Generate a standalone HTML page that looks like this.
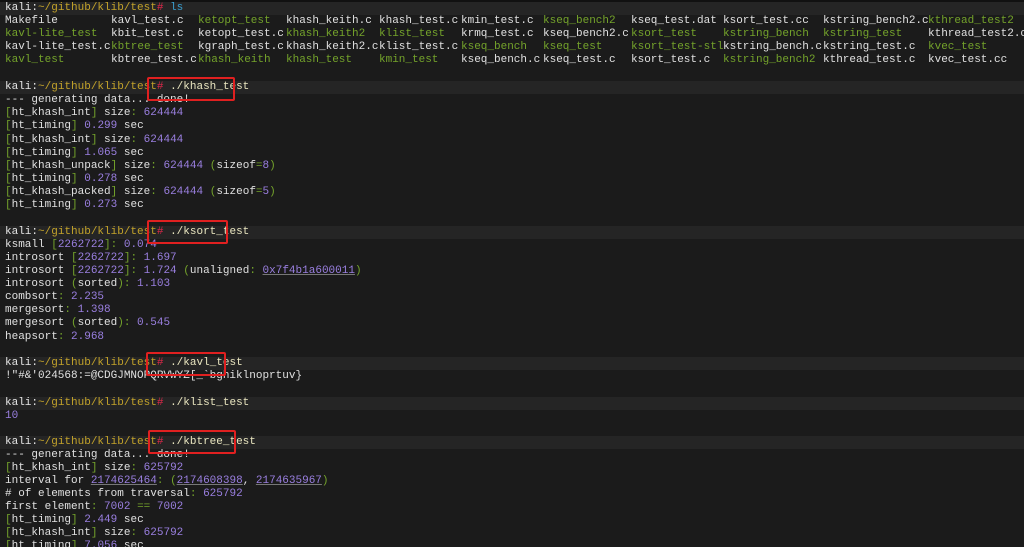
<!DOCTYPE html>
<html><head><meta charset="utf-8"><style>
html,body{margin:0;padding:0;background:#1b1b1b;width:1024px;height:547px;overflow:hidden;}
body{position:relative;font-family:"Liberation Mono","DejaVu Sans Mono",monospace;font-size:11px;color:#e0e0e0;}
.l{position:absolute;left:0;width:1024px;height:13px;line-height:13px;white-space:pre;}
.p{background:#252525;}
.t{position:absolute;top:0;}
.w{color:#e4e4e4}.y{color:#c2a22a}.r{color:#e0284a}.c{color:#3a9fd0}
.g{color:#74a32b}.n{color:#9a7fe0}.cmd{color:#eae6c0}
.u{text-decoration:underline;text-decoration-color:#777}
.box{position:absolute;border:2px solid #e02020;border-radius:2px;box-sizing:border-box;}
</style></head><body>
<div style="position:absolute;top:0;left:0;width:1024px;height:2px;background:#111"></div>
<div class="l p" style="top:2px"><span class="t" style="left:5px"><span class="w">kali:</span><span class="y">~/github/klib/test</span><span class="r">#</span> <span class="c">ls</span></span></div>
<div class="l" style="top:15px"><span class="t" style="left:5px">Makefile</span><span class="t" style="left:111px">kavl_test.c</span><span class="t g" style="left:198px">ketopt_test</span><span class="t" style="left:286px">khash_keith.c</span><span class="t" style="left:379px">khash_test.c</span><span class="t" style="left:461px">kmin_test.c</span><span class="t g" style="left:543px">kseq_bench2</span><span class="t" style="left:631px">kseq_test.dat</span><span class="t" style="left:723px">ksort_test.cc</span><span class="t" style="left:823px">kstring_bench2.c</span><span class="t g" style="left:928px">kthread_test2</span></div>
<div class="l" style="top:28px"><span class="t g" style="left:5px">kavl-lite_test</span><span class="t" style="left:111px">kbit_test.c</span><span class="t" style="left:198px">ketopt_test.c</span><span class="t g" style="left:286px">khash_keith2</span><span class="t g" style="left:379px">klist_test</span><span class="t" style="left:461px">krmq_test.c</span><span class="t" style="left:543px">kseq_bench2.c</span><span class="t g" style="left:631px">ksort_test</span><span class="t g" style="left:723px">kstring_bench</span><span class="t g" style="left:823px">kstring_test</span><span class="t" style="left:928px">kthread_test2.c</span></div>
<div class="l" style="top:41px"><span class="t" style="left:5px">kavl-lite_test.c</span><span class="t g" style="left:111px">kbtree_test</span><span class="t" style="left:198px">kgraph_test.c</span><span class="t" style="left:286px">khash_keith2.c</span><span class="t" style="left:379px">klist_test.c</span><span class="t g" style="left:461px">kseq_bench</span><span class="t g" style="left:543px">kseq_test</span><span class="t g" style="left:631px">ksort_test-stl</span><span class="t" style="left:723px">kstring_bench.c</span><span class="t" style="left:823px">kstring_test.c</span><span class="t g" style="left:928px">kvec_test</span></div>
<div class="l" style="top:54px"><span class="t g" style="left:5px">kavl_test</span><span class="t" style="left:111px">kbtree_test.c</span><span class="t g" style="left:198px">khash_keith</span><span class="t g" style="left:286px">khash_test</span><span class="t g" style="left:379px">kmin_test</span><span class="t" style="left:461px">kseq_bench.c</span><span class="t" style="left:543px">kseq_test.c</span><span class="t" style="left:631px">ksort_test.c</span><span class="t g" style="left:723px">kstring_bench2</span><span class="t" style="left:823px">kthread_test.c</span><span class="t" style="left:928px">kvec_test.cc</span></div>

<div class="l p" style="top:81px"><span class="t" style="left:5px"><span class="w">kali:</span><span class="y">~/github/klib/test</span><span class="r">#</span> <span class="cmd">./khash_test</span></span></div>
<div class="l" style="top:94px"><span class="t" style="left:5px">--- generating data... done!</span></div>
<div class="l" style="top:107px"><span class="t" style="left:5px"><span class="g">[</span>ht_khash_int<span class="g">]</span> size<span class="g">:</span> <span class="n">624444</span></span></div>
<div class="l" style="top:120px"><span class="t" style="left:5px"><span class="g">[</span>ht_timing<span class="g">]</span> <span class="n">0.299</span> sec</span></div>
<div class="l" style="top:134px"><span class="t" style="left:5px"><span class="g">[</span>ht_khash_int<span class="g">]</span> size<span class="g">:</span> <span class="n">624444</span></span></div>
<div class="l" style="top:147px"><span class="t" style="left:5px"><span class="g">[</span>ht_timing<span class="g">]</span> <span class="n">1.065</span> sec</span></div>
<div class="l" style="top:160px"><span class="t" style="left:5px"><span class="g">[</span>ht_khash_unpack<span class="g">]</span> size<span class="g">:</span> <span class="n">624444</span> <span class="g">(</span>sizeof<span class="g">=</span><span class="n">8</span><span class="g">)</span></span></div>
<div class="l" style="top:173px"><span class="t" style="left:5px"><span class="g">[</span>ht_timing<span class="g">]</span> <span class="n">0.278</span> sec</span></div>
<div class="l" style="top:186px"><span class="t" style="left:5px"><span class="g">[</span>ht_khash_packed<span class="g">]</span> size<span class="g">:</span> <span class="n">624444</span> <span class="g">(</span>sizeof<span class="g">=</span><span class="n">5</span><span class="g">)</span></span></div>
<div class="l" style="top:199px"><span class="t" style="left:5px"><span class="g">[</span>ht_timing<span class="g">]</span> <span class="n">0.273</span> sec</span></div>

<div class="l p" style="top:226px"><span class="t" style="left:5px"><span class="w">kali:</span><span class="y">~/github/klib/test</span><span class="r">#</span> <span class="cmd">./ksort_test</span></span></div>
<div class="l" style="top:239px"><span class="t" style="left:5px">ksmall <span class="g">[</span><span class="n">2262722</span><span class="g">]:</span> <span class="n">0.074</span></span></div>
<div class="l" style="top:252px"><span class="t" style="left:5px">introsort <span class="g">[</span><span class="n">2262722</span><span class="g">]:</span> <span class="n">1.697</span></span></div>
<div class="l" style="top:265px"><span class="t" style="left:5px">introsort <span class="g">[</span><span class="n">2262722</span><span class="g">]:</span> <span class="n">1.724</span> <span class="g">(</span>unaligned<span class="g">:</span> <span class="n u">0x7f4b1a600011</span><span class="g">)</span></span></div>
<div class="l" style="top:278px"><span class="t" style="left:5px">introsort <span class="g">(</span>sorted<span class="g">):</span> <span class="n">1.103</span></span></div>
<div class="l" style="top:291px"><span class="t" style="left:5px">combsort<span class="g">:</span> <span class="n">2.235</span></span></div>
<div class="l" style="top:304px"><span class="t" style="left:5px">mergesort<span class="g">:</span> <span class="n">1.398</span></span></div>
<div class="l" style="top:317px"><span class="t" style="left:5px">mergesort <span class="g">(</span>sorted<span class="g">):</span> <span class="n">0.545</span></span></div>
<div class="l" style="top:331px"><span class="t" style="left:5px">heapsort<span class="g">:</span> <span class="n">2.968</span></span></div>

<div class="l p" style="top:357px"><span class="t" style="left:5px"><span class="w">kali:</span><span class="y">~/github/klib/test</span><span class="r">#</span> <span class="cmd">./kavl_test</span></span></div>
<div class="l" style="top:370px"><span class="t" style="left:5px">!"#&amp;'024568:=@CDGJMNOPQRVWYZ[_`bghiklnoprtuv}</span></div>

<div class="l p" style="top:397px"><span class="t" style="left:5px"><span class="w">kali:</span><span class="y">~/github/klib/test</span><span class="r">#</span> <span class="cmd">./klist_test</span></span></div>
<div class="l" style="top:410px"><span class="t n" style="left:5px">10</span></div>

<div class="l p" style="top:436px"><span class="t" style="left:5px"><span class="w">kali:</span><span class="y">~/github/klib/test</span><span class="r">#</span> <span class="cmd">./kbtree_test</span></span></div>
<div class="l" style="top:449px"><span class="t" style="left:5px">--- generating data... done!</span></div>
<div class="l" style="top:462px"><span class="t" style="left:5px"><span class="g">[</span>ht_khash_int<span class="g">]</span> size<span class="g">:</span> <span class="n">625792</span></span></div>
<div class="l" style="top:475px"><span class="t" style="left:5px">interval for <span class="n u">2174625464</span><span class="g">:</span> <span class="g">(</span><span class="n u">2174608398</span>, <span class="n u">2174635967</span><span class="g">)</span></span></div>
<div class="l" style="top:488px"><span class="t" style="left:5px"># of elements from traversal<span class="g">:</span> <span class="n">625792</span></span></div>
<div class="l" style="top:501px"><span class="t" style="left:5px">first element<span class="g">:</span> <span class="n">7002</span> <span class="g">==</span> <span class="n">7002</span></span></div>
<div class="l" style="top:514px"><span class="t" style="left:5px"><span class="g">[</span>ht_timing<span class="g">]</span> <span class="n">2.449</span> sec</span></div>
<div class="l" style="top:527px"><span class="t" style="left:5px"><span class="g">[</span>ht_khash_int<span class="g">]</span> size<span class="g">:</span> <span class="n">625792</span></span></div>
<div class="l" style="top:540px"><span class="t" style="left:5px"><span class="g">[</span>ht_timing<span class="g">]</span> <span class="n">7.056</span> sec</span></div>

<div class="box" style="left:147px;top:77px;width:88px;height:24px"></div>
<div class="box" style="left:147px;top:220px;width:81px;height:24px"></div>
<div class="box" style="left:146px;top:352px;width:80px;height:24px"></div>
<div class="box" style="left:148px;top:430px;width:88px;height:24px"></div>
</body></html>
